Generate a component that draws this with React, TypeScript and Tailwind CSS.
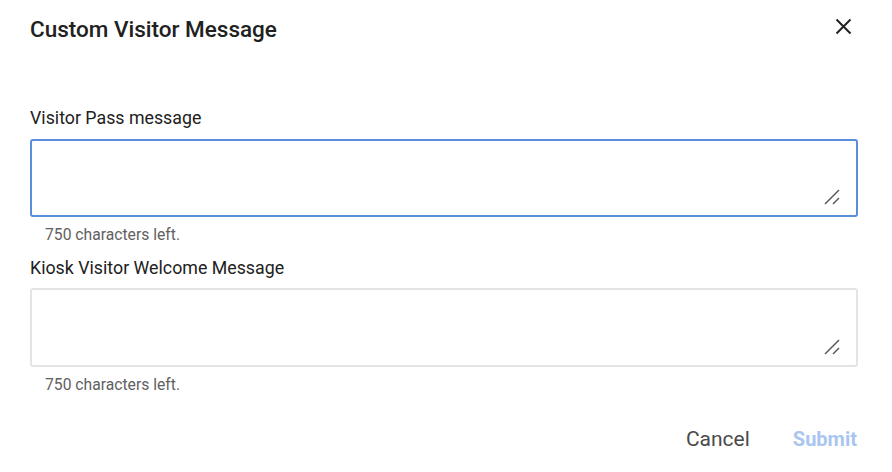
import React from "react";

function Handle() {
  return (
    <svg className="absolute right-[16px] bottom-[10px]" width="16" height="16" viewBox="0 0 16 16">
      <line x1="15" y1="1" x2="1" y2="15" stroke="#555" strokeWidth="1.4" />
      <line x1="15" y1="9" x2="9" y2="15" stroke="#555" strokeWidth="1.4" />
    </svg>
  );
}

export default function App() {
  return (
    <div className="w-[892px] h-[472px] bg-white pl-[30px] pr-[34px] font-['Roboto',sans-serif] text-[#212121] overflow-hidden">
      <div className="flex items-start justify-between pt-[15px]">
        <h1 className="text-[22.5px] leading-7 font-medium text-[#212121]">Custom Visitor Message</h1>
        <svg className="mt-[3px] mr-[6px]" width="17" height="17" viewBox="0 0 17 17">
          <path d="M1.5 1.5 L15.5 15.5 M15.5 1.5 L1.5 15.5" stroke="#222" strokeWidth="2" />
        </svg>
      </div>
      <div className="mt-[63px] text-[17.8px] leading-6">Visitor Pass message</div>
      <div className="relative mt-[9px] h-[78px] border-2 border-[#5a8ddb] rounded-[3px]">
        <textarea className="w-full h-full resize-none outline-none bg-transparent" />
        <Handle />
      </div>
      <div className="mt-[8px] pl-[15px] text-[15.7px] leading-5 text-[#616161]">750 characters left.</div>
      <div className="mt-[11px] text-[17.8px] leading-6">Kiosk Visitor Welcome Message</div>
      <div className="relative mt-[8px] h-[79px] border-2 border-[#e4e4e4] rounded-[3px]">
        <textarea className="w-full h-full resize-none outline-none bg-transparent" />
        <Handle />
      </div>
      <div className="mt-[8px] pl-[15px] text-[15.7px] leading-5 text-[#616161]">750 characters left.</div>
      <div className="mt-[30px] flex justify-end items-center gap-[43px] pr-[1px]">
        <button className="text-[21px] leading-7 text-[#4a4a4a]">Cancel</button>
        <button className="text-[20px] leading-7 font-bold text-[#a8c6f0]">Submit</button>
      </div>
    </div>
  );
}
